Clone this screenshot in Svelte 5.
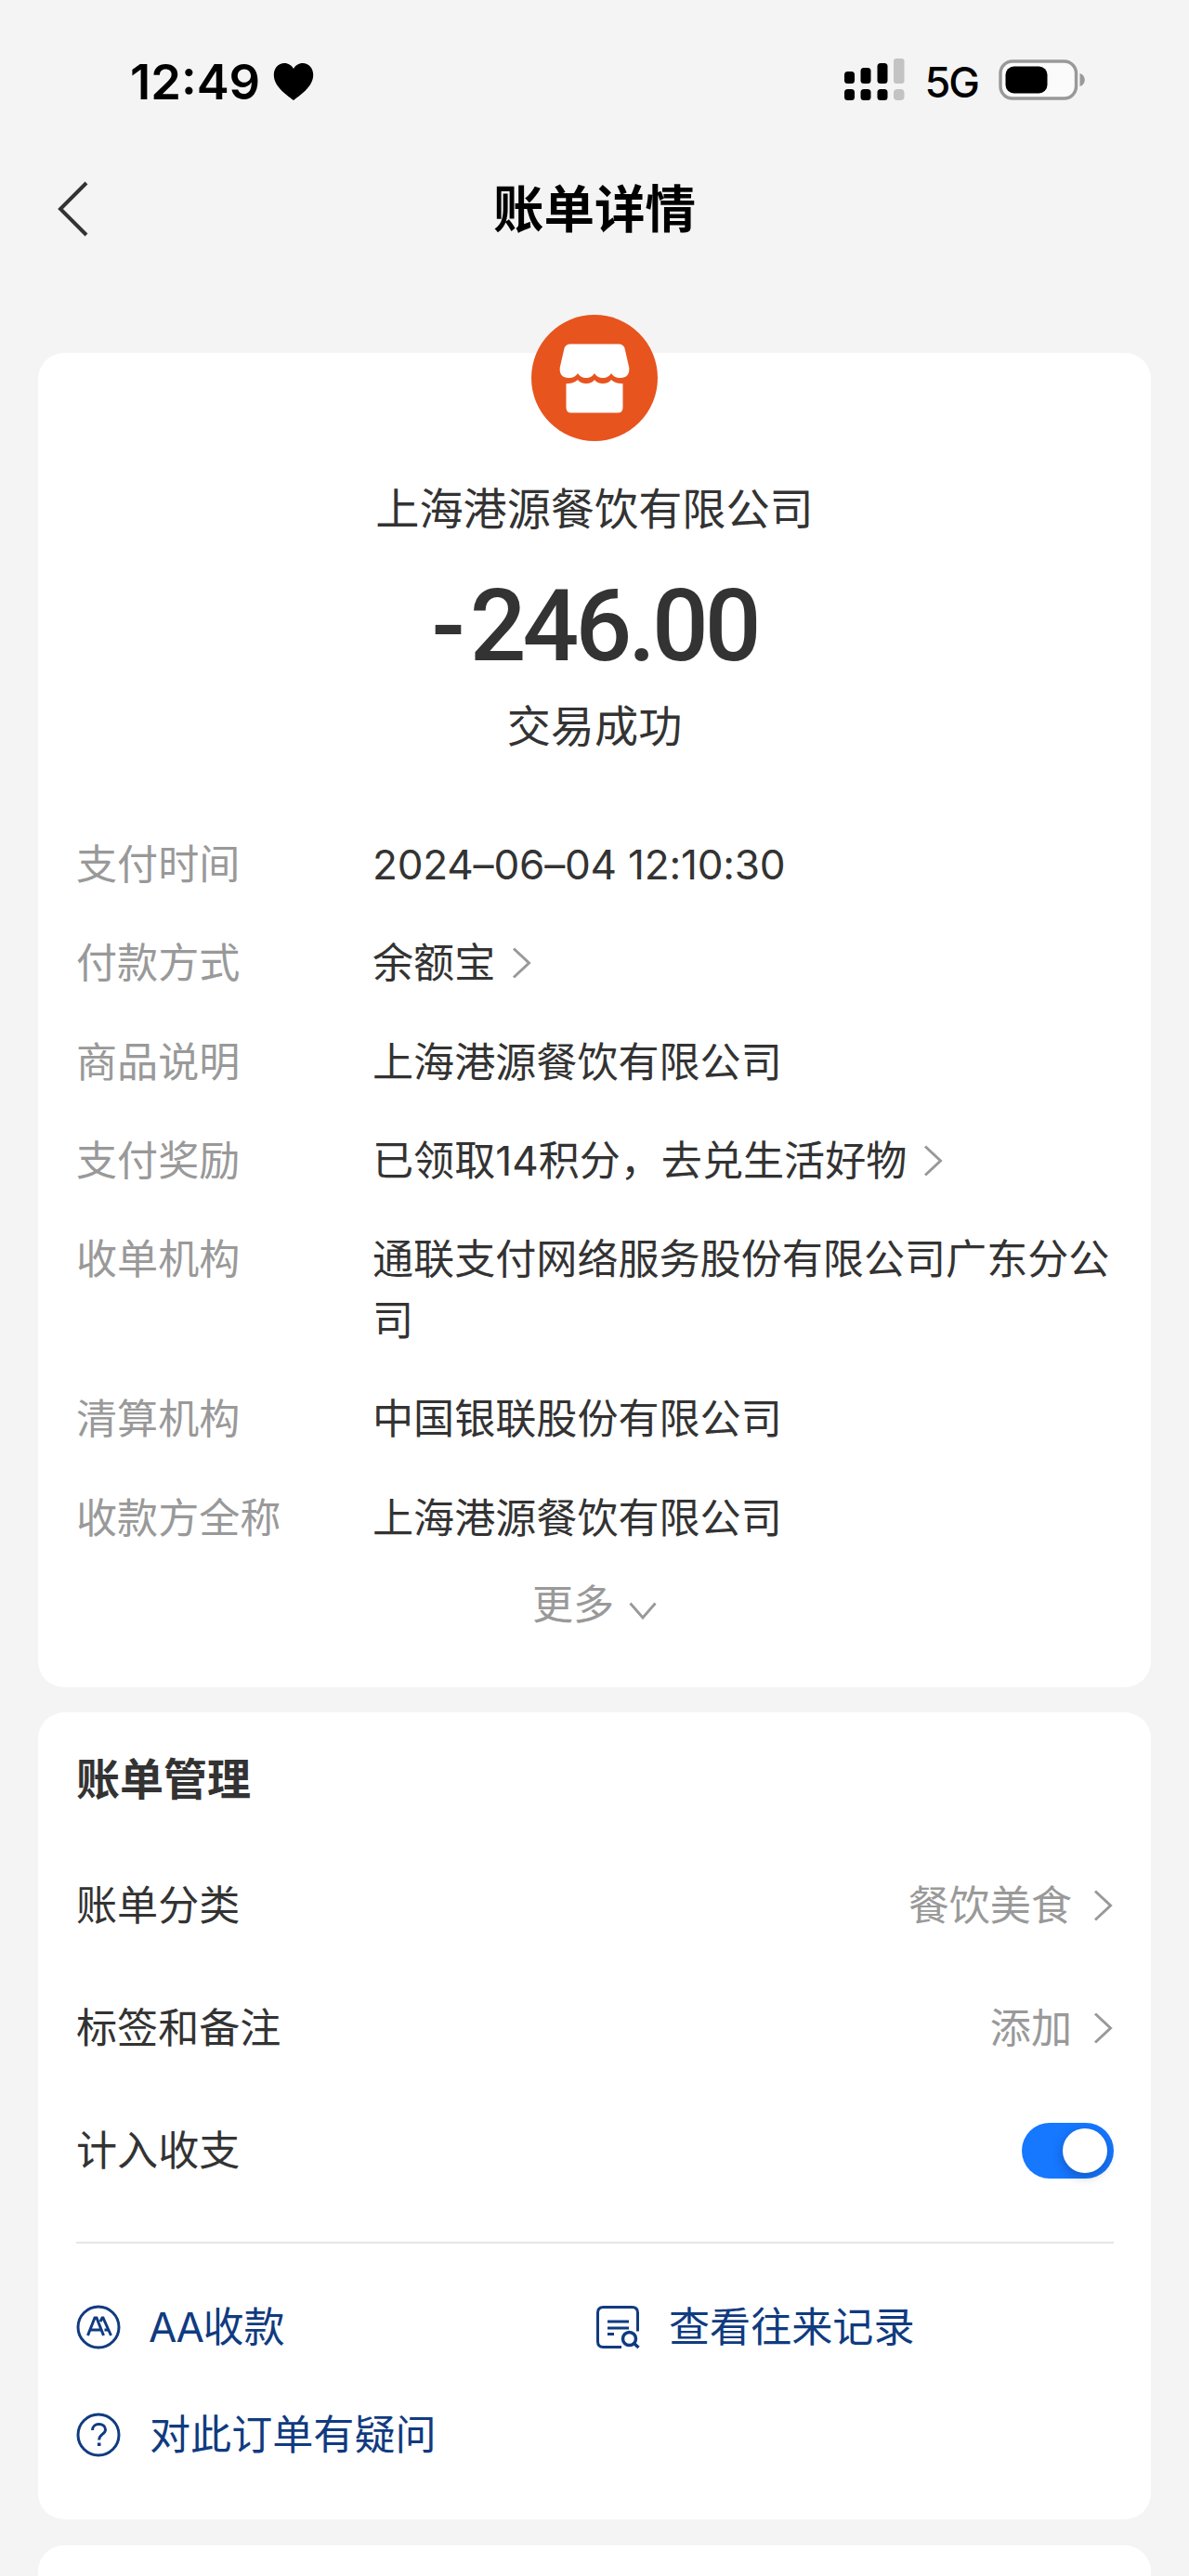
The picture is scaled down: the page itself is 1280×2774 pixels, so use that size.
<script>
  const details = [
    { label: '支付时间', value: '2024–06–04 12:10:30', numeric: true },
    { label: '付款方式', value: '余额宝', link: true },
    { label: '商品说明', value: '上海港源餐饮有限公司' },
    { label: '支付奖励', value: '已领取14积分，去兑生活好物', link: true },
    { label: '收单机构', value: '通联支付网络服务股份有限公司广东分公司' },
    { label: '清算机构', value: '中国银联股份有限公司' },
    { label: '收款方全称', value: '上海港源餐饮有限公司' }
  ];
  const settings = [
    { label: '账单分类', value: '餐饮美食' },
    { label: '标签和备注', value: '添加' }
  ];
  let counted = $state(true);
</script>

{#snippet chevron()}
  <svg class="chevron" width="22" height="34" viewBox="0 0 22 34" fill="none" stroke="#999" stroke-width="3">
    <path d="M2 1.5 18.5 17 2 32.5" />
  </svg>
{/snippet}

<div class="screen">
  <header class="status">
    <div class="clock">
      <span class="time">12:49</span>
      <svg width="44" height="42" viewBox="0 0 44 42">
        <path d="M22 41C13 34 .8 26 .8 13.500C.8 6 6 1 12 1C16.500 1 20 3.500 22 7C24 3.500 27.500 1 32 1C38 1 43.200 6 43.200 13.500C43.200 26 31 34 22 41Z" />
      </svg>
    </div>
    <div class="indicators">
      <svg width="66" height="46" viewBox="0 0 66 46">
        <g>
          <rect x="1" y="14" width="11" height="13" rx="3.500" />
          <rect x="18.500" y="10" width="11" height="17" rx="3.500" />
          <rect x="36.500" y="5" width="11" height="22" rx="3.500" />
          <rect x="1" y="33" width="11" height="12" rx="3.500" />
          <rect x="18.500" y="33" width="11" height="12" rx="3.500" />
          <rect x="36.500" y="33" width="11" height="12" rx="3.500" />
        </g>
        <g fill="#c3c3c3">
          <rect x="54" y="0" width="11.500" height="27" rx="3" />
          <rect x="54" y="33" width="11.500" height="12" rx="4" />
        </g>
      </svg>
      <span class="network">5G</span>
      <svg width="94" height="44" viewBox="0 0 94 44">
        <rect x="2" y="2" width="81.500" height="40" rx="13" fill="#fbfbfb" stroke="#999" stroke-width="3.400" />
        <rect x="7.500" y="7.500" width="45" height="29" rx="9" />
        <path d="M87.500 15C94.500 17 94.500 27 87.500 29Z" fill="#999" />
      </svg>
    </div>
  </header>

  <nav class="navbar">
    <svg width="36" height="60" viewBox="0 0 36 60" fill="none" stroke="#333" stroke-width="4">
      <path d="M33 2 5 30 33 58" />
    </svg>
    <h1>账单详情</h1>
  </nav>

  <section class="card receipt">
    <svg class="shop" width="136" height="136" viewBox="0 0 136 136">
      <circle cx="68" cy="68" r="68" fill="#e7541e" />
      <path fill="#fff" d="M42 31.500H94Q99 31.500 100.500 36L105.300 57Q106 68 95.500 68Q89 68 86 63Q83 68 77 68Q71 68 68 63Q65 68 59 68Q53 68 50 63Q47 68 40.500 68Q30 68 30.700 57L35.500 36Q37 31.500 42 31.500Z" />
      <path fill="#fff" d="M37.500 74Q45 74.500 50 70Q53 74 59 74Q65 74 68 70Q71 74 77 74Q83 74 86 70Q91 74.500 98.500 74V100Q98.500 105.500 93 105.500H43Q37.500 105.500 37.500 100Z" />
    </svg>
    <h2>上海港源餐饮有限公司</h2>
    <div class="amount"><span class="sign">-</span>246.00</div>
    <div class="state">交易成功</div>

    <dl>
      {#each details as row}
        <div class="row">
          <dt>{row.label}</dt>
          <dd class:numeric={row.numeric}>
            <span>{row.value}</span>
            {#if row.link}{@render chevron()}{/if}
          </dd>
        </div>
      {/each}
    </dl>

    <div class="more">
      <span>更多</span>
      <svg width="30" height="20" viewBox="0 0 30 20" fill="none" stroke="#999" stroke-width="2.800">
        <path d="M1.500 1.500 15 17 28.500 1.500" />
      </svg>
    </div>
  </section>

  <section class="card manage">
    <h3>账单管理</h3>
    {#each settings as item}
      <div class="setting">
        <span>{item.label}</span>
        <span class="hint">{item.value}{@render chevron()}</span>
      </div>
    {/each}
    <div class="setting">
      <span>计入收支</span>
      <button class="switch" class:on={counted} aria-label="计入收支" onclick={() => (counted = !counted)}>
        <i></i>
      </button>
    </div>

    <div class="actions">
      <div class="action">
        <svg width="48" height="48" viewBox="0 0 48 48" fill="none" stroke="#103b80" stroke-width="3">
          <circle cx="24" cy="24" r="22" />
          <path d="M12.500 33 20 14H22L29.500 33M15.500 27H27M26 18 28 14H29L37.500 33M30.500 27H34" />
        </svg>
        <span><span class="latin">AA</span>收款</span>
      </div>
      <div class="action">
        <svg width="48" height="48" viewBox="0 0 48 48" fill="none" stroke="#103b80" stroke-width="3">
          <path d="M28 45.500H8.500Q2.500 45.500 2.500 39.500V8.500Q2.500 2.500 8.500 2.500H39.500Q45.500 2.500 45.500 8.500V28.500" />
          <path d="M13 18H36M13 25H36M13 31.500H20" />
          <circle cx="36.500" cy="36.500" r="7" stroke-width="3.500" />
          <path d="M41.500 41.500 46.500 46" stroke-width="3.500" />
        </svg>
        <span>查看往来记录</span>
      </div>
      <div class="action">
        <svg width="48" height="48" viewBox="0 0 48 48" fill="none" stroke="#103b80" stroke-width="3">
          <circle cx="24" cy="24" r="22" />
          <path d="M17.500 19C17.500 15 20.500 12.500 24.500 12.500C28.500 12.500 31.500 15 31.500 18.500C31.500 23.500 24.700 23 24.700 29.500" />
          <path d="M24.700 32.500V36" stroke-width="3.600" />
        </svg>
        <span>对此订单有疑问</span>
      </div>
    </div>
  </section>

  <section class="card next"></section>
</div>

<style>
  :global(body) {
    margin: 0;
    background: #f4f4f4;
  }
  .screen {
    width: 1280px;
    height: 2774px;
    overflow: hidden;
    box-sizing: border-box;
    background: #f4f4f4;
    color: #333;
    font-family: Inter, 'Noto Sans CJK SC', sans-serif;
    font-size: 44.080px;
    line-height: 66px;
  }
  svg {
    display: block;
    flex: none;
  }
  h1, h2, h3, dl, dd {
    margin: 0;
  }
  .status {
    display: flex;
    justify-content: space-between;
    align-items: center;
    height: 172px;
    padding: 0 111px 0 140px;
    box-sizing: border-box;
    color: #000;
  }
  .clock, .indicators {
    display: flex;
    align-items: center;
  }
  .clock {
    gap: 14px;
    padding-top: 3px;
  }
  .time {
    font-size: 52.500px;
    font-weight: 600;
    letter-spacing: 0;
  }
  .network {
    margin: 5px 22px 0 22px;
    font-size: 45px;
    font-weight: 500;
    letter-spacing: -2px;
  }
  .navbar {
    display: grid;
    grid-template-columns: 60px 1fr 60px;
    align-items: center;
    height: 106px;
    padding: 0 60px;
  }
  h1 {
    color: #000;
    text-align: center;
    font-size: 54.500px;
    font-weight: 600;
  }
  .card {
    margin: 0 41px;
    box-sizing: border-box;
    border-radius: 28px;
    background: #fff;
  }
  .receipt {
    display: flex;
    flex-direction: column;
    align-items: center;
    height: 1437px;
    margin-top: 102px;
    padding: 0 41px;
  }
  .shop {
    margin-top: -41px;
  }
  h2, .state {
    font-size: 47.150px;
    font-weight: 400;
  }
  h2 {
    margin-top: 40px;
  }
  .amount {
    margin-top: 38px;
    font-family: Roboto, sans-serif;
    font-size: 107px;
    font-weight: 500;
    line-height: 112px;
    letter-spacing: -4px;
  }
  .sign {
    margin-right: 9px;
  }
  .state {
    margin-top: 18px;
  }
  dl {
    display: grid;
    gap: 40.300px;
    width: 100%;
    margin-top: 83px;
  }
  .row {
    display: grid;
    grid-template-columns: 319px 1fr;
  }
  dt {
    color: #999;
  }
  dd {
    display: flex;
    align-items: center;
    gap: 18px;
  }
  .numeric {
    letter-spacing: -0.200px;
  }
  .more {
    display: flex;
    align-items: center;
    gap: 16px;
    margin-top: 27px;
    color: #999;
  }
  .more svg {
    margin-top: 14px;
  }
  .manage {
    height: 869px;
    margin-top: 27px;
    padding: 39px 40px 0 41px;
  }
  h3 {
    margin-bottom: 37px;
    font-size: 47px;
    font-weight: 700;
  }
  .setting {
    display: flex;
    justify-content: space-between;
    align-items: center;
    height: 132px;
  }
  .hint {
    display: flex;
    align-items: center;
    gap: 23px;
    color: #999;
  }
  .switch {
    width: 99px;
    height: 60px;
    padding: 6px 7px;
    border: 0;
    border-radius: 30px;
    background: #ddd;
  }
  .switch i {
    display: block;
    width: 48px;
    height: 48px;
    border-radius: 50%;
    background: #fff;
    box-shadow: 0 4px 12px rgba(0, 0, 0, 0.25);
  }
  .on {
    background: #1677ff;
  }
  .on i {
    margin-left: auto;
  }
  .actions {
    display: grid;
    grid-template-columns: 559px 1fr;
    row-gap: 50px;
    margin-top: 32px;
    padding-top: 57px;
    border-top: 2px solid #e6e6e6;
    color: #103b80;
  }
  .action {
    display: flex;
    align-items: center;
    gap: 31px;
  }
  .latin {
    margin-left: -1px;
    letter-spacing: -1.500px;
  }
  .next {
    height: 80px;
    margin-top: 28px;
  }
</style>
